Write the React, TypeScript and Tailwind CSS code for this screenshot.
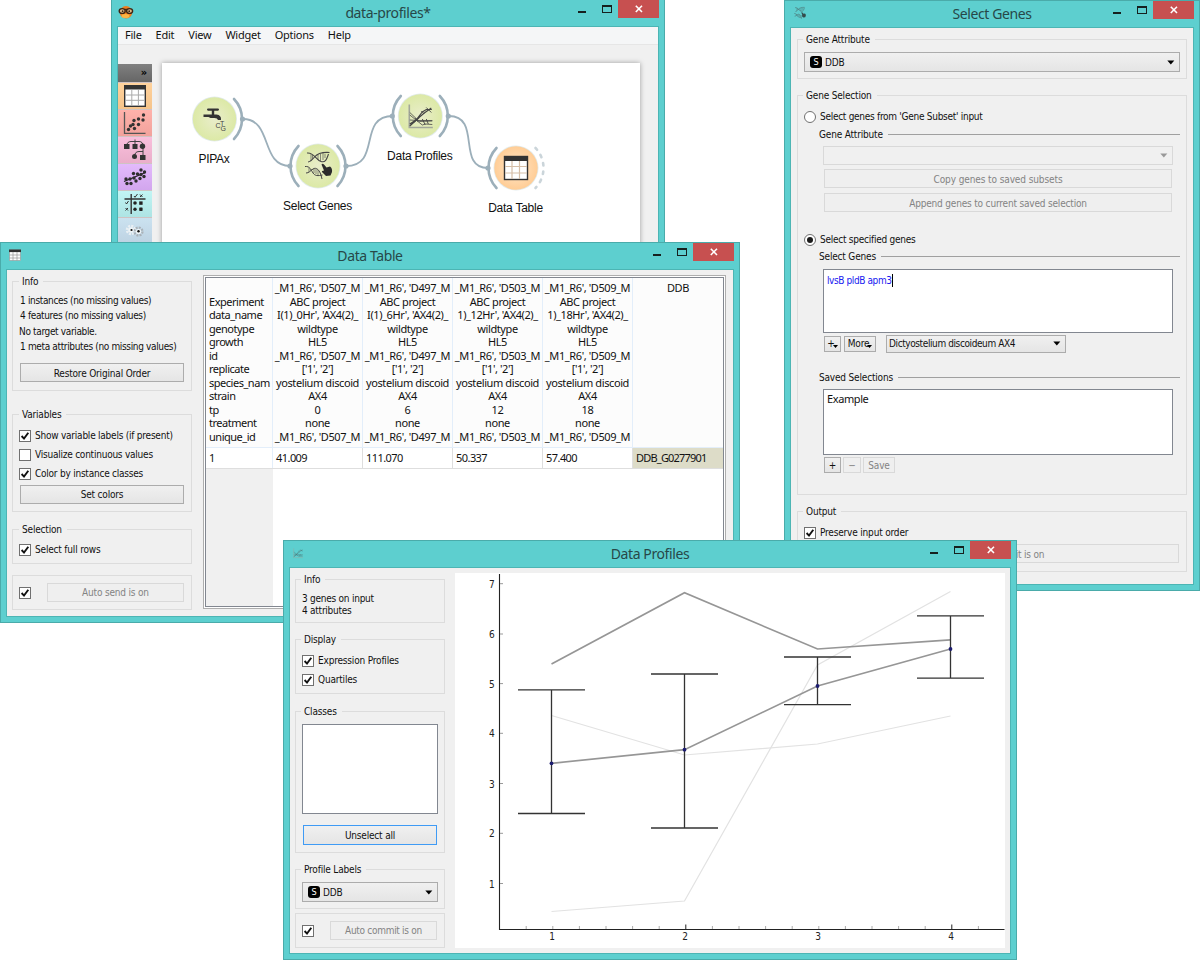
import React from "react";

type Kids = { children?: React.ReactNode; className?: string };

const UI = "font-['DejaVu_Sans_Condensed','DejaVu_Sans',sans-serif] text-[10px] tracking-[-0.18px]";
const SEGOE = "font-['Noto_Sans',sans-serif]";

function AppWindow({ title, icon, className, children }: Kids & { title: string; icon: React.ReactNode }) {
  return (
    <section className={`absolute flex flex-col border border-[#4aabaa] bg-[#5dcfcf] px-[5px] pb-[5px] ${className}`}>
      <header className="relative flex h-[26px] shrink-0 items-start">
        <div className="ml-[1px] mt-[4px] h-4 w-4">{icon}</div>
        <h1 className={`absolute inset-x-0 top-[3px] text-center text-[14px] leading-[20px] tracking-[-0.4px] text-[#274848] ${SEGOE}`}>{title}</h1>
        <div className="ml-auto flex items-start">
          <i className="mr-[16px] mt-[11px] h-[2px] w-[8px] bg-[#16211f]" />
          <i className="mr-[6px] mt-[5px] h-[8px] w-[10px] border border-t-2 border-[#16211f]" />
          <span className="flex h-[18px] w-[41px] items-center justify-center bg-[#c75050]">
            <svg width="8" height="8" viewBox="0 0 8 8"><path d="M0.8 0.8L7 7M7 0.8L0.8 7" stroke="#fff" strokeWidth="1.6" /></svg>
          </span>
        </div>
      </header>
      <div className={`flex min-h-0 flex-1 border border-[#4cb5b4] bg-[#f0f0f0] text-[#111] ${UI}`}>{children}</div>
    </section>
  );
}

function Group({ title, className = "", children }: Kids & { title: string }) {
  return (
    <fieldset className={`flex min-w-0 shrink-0 flex-col border border-[#dcdcdc] ${className}`}>
      <legend className="-ml-px h-[14px] whitespace-nowrap pl-[3px] pr-[5px] leading-[16px]">{title}</legend>
      {children}
    </fieldset>
  );
}

function Button({ children, className = "", disabled = false, focused = false }: Kids & { disabled?: boolean; focused?: boolean }) {
  const look = disabled
    ? "border-[#d9d9d9] bg-[#efefef] text-[#838383]"
    : focused
      ? "border-[#3f9bf5] bg-linear-to-b from-[#f0f0f0] to-[#e5e5e5] text-[#111]"
      : "border-[#acacac] bg-linear-to-b from-[#f0f0f0] to-[#e5e5e5] text-[#111]";
  return (
    <button className={`flex shrink-0 items-center justify-center whitespace-nowrap border ${look} ${className}`}>{children}</button>
  );
}

function Box({ checked = true }: { checked?: boolean }) {
  return (
    <span className="flex h-[12px] w-[12px] shrink-0 items-center justify-center border border-[#707070] bg-white">
      {checked && (
        <svg width="10" height="10" viewBox="0 0 10 10"><path d="M1.6 5L4 7.6L8.3 1.8" fill="none" stroke="#111" strokeWidth="1.9" /></svg>
      )}
    </span>
  );
}

function Check({ label, checked = true }: { label: string; checked?: boolean }) {
  return (
    <label className="flex h-[19px] shrink-0 items-center gap-[4px] whitespace-nowrap"><Box checked={checked} />{label}</label>
  );
}

function Radio({ label, on = false, className = "" }: { label: string; on?: boolean; className?: string }) {
  return (
    <label className={`flex h-[19px] shrink-0 items-center gap-[4px] whitespace-nowrap ${className}`}>
      <span className="flex h-[12px] w-[12px] items-center justify-center rounded-full border border-[#707070] bg-white">
        {on && <i className="h-[6px] w-[6px] rounded-full bg-[#1a1a1a]" />}
      </span>
      {label}
    </label>
  );
}

function Rule({ label, className = "" }: { label: string; className?: string }) {
  return (
    <div className={`flex h-[14px] shrink-0 items-center gap-[5px] pl-[15px] whitespace-nowrap ${className}`}>
      {label}<i className="h-px flex-1 bg-[#a0a0a0]" />
    </div>
  );
}

function Arrow({ color = "#000" }: { color?: string }) {
  return <svg width="8" height="5" viewBox="0 0 8 5"><path d="M0.3 0.5H7.3L3.8 4.5Z" fill={color} /></svg>;
}

function MenuTick() {
  return <svg className="-ml-[2px] mt-[6px]" width="5" height="3" viewBox="0 0 5 3"><path d="M0 0H5L2.500 3Z" /></svg>;
}

function DdbSelect() {
  return (
    <div className="flex h-[20px] shrink-0 items-center border border-[#acacac] bg-linear-to-b from-[#f0f0f0] to-[#e5e5e5] pl-[5px] pr-[4px]">
      <span className="mr-[3px] flex h-[12px] w-[12px] items-center justify-center rounded-[3px] bg-black text-[9px] leading-none tracking-normal text-white">S</span>
      DDB
      <span className="ml-auto"><Arrow /></span>
    </div>
  );
}

function TableGlyph() {
  return (
    <svg width="22" height="22" viewBox="0 0 22 22">
      <rect x="0.7" y="0.7" width="20.6" height="20.6" fill="#fff" stroke="#333" strokeWidth="1.4" />
      <rect x="0" y="0" width="22" height="4.5" fill="#333" />
      <path d="M7.8 5V21M14.4 5V21M1 10H21M1 15.3H21" stroke="#aaa" strokeWidth="1" />
    </svg>
  );
}

function ScatterGlyph() {
  const dots = [[5.5, 18.5], [10, 13.5], [7.5, 15], [11.5, 17.5], [11, 9.5], [15.500, 8], [15.5, 13.500], [20.5, 4], [20, 9]];
  return (
    <svg width="24" height="24" viewBox="0 0 24 24">
      <path d="M1.5 1V22.3H22.5" fill="none" stroke="#555" strokeWidth="1.3" />
      {dots.map(([x, y], i) => <circle key={i} cx={x} cy={y} r="1.7" fill="#333" />)}
    </svg>
  );
}

function TreeGlyph() {
  return (
    <svg width="24" height="24" viewBox="0 0 24 24">
      <path d="M3.5 8Q4 3.5 8 3.5H16Q20 3.5 20 8M12 1.500V8M20 9V17M11.5 19Q11.5 13.5 16 13.5H20" fill="none" stroke="#444" strokeWidth="1" />
      <g fill="#333"><rect x="1" y="6" width="5.5" height="5" /><rect x="9.5" y="6" width="5" height="5" /><circle cx="19.5" cy="8.3" r="2.7" /><circle cx="11.5" cy="18.500" r="2.5" /><rect x="17" y="17" width="5.5" height="5" /></g>
    </svg>
  );
}

function RegressionGlyph() {
  const dots = [[3, 14], [4, 18.500], [7, 14], [8, 18.500], [10.500, 8.500], [13, 16], [11, 13], [14.500, 9], [17, 13.500], [18, 5], [18, 9.500], [21.500, 7], [21, 11.500]];
  return (
    <svg width="24" height="24" viewBox="0 0 24 24">
      <path d="M1 16.5L22.5 7.5" stroke="#222" strokeWidth="1.2" />
      {dots.map(([x, y], i) => <circle key={i} cx={x} cy={y} r="1.7" fill="#2e2e2e" />)}
    </svg>
  );
}

function MatrixGlyph() {
  return (
    <svg width="24" height="24" viewBox="0 0 24 24" fill="none" stroke="#333">
      <path d="M1.5 7H22.5M8.2 2V22" strokeWidth="1.4" />
      <path d="M11 4L12 5.3L14.5 2M17 2.5L19.5 5M19.5 2.5L17 5M2.5 10.5L3.5 12L5.5 9M2.5 16L5 18.5M5 16L2.5 18.5" strokeWidth="1" />
      <g fill="#222" stroke="none"><circle cx="12" cy="11" r="1.800" /><rect x="16.200" y="9.400" width="3.400" height="3.400" /><circle cx="12" cy="17.2" r="1.7" /><rect x="16.200" y="15.500" width="3.400" height="3.400" rx="0.600" /></g>
    </svg>
  );
}

function BioGlyph() {
  return (
    <svg width="24" height="24" viewBox="0 0 24 24">
      <circle cx="8" cy="11" r="4" fill="none" stroke="#e9eff3" strokeWidth="2.500" strokeDasharray="2 1.1" />
      <circle cx="15.5" cy="12.500" r="4" fill="none" stroke="#aab2b8" strokeWidth="2.200" strokeDasharray="2 1.1" />
      <g fill="#edf3f6"><circle cx="8" cy="11" r="2.800" /><circle cx="15.5" cy="12.5" r="2.6" /></g>
      <circle cx="8.5" cy="11" r="1.1" fill="#111" /><circle cx="15.5" cy="12.2" r="1.2" fill="#111" />
    </svg>
  );
}

function OrangeLogo() {
  return (
    <svg width="16" height="16" viewBox="0 0 16 16">
      <circle cx="8" cy="8.300" r="6.200" fill="#ef7d1c" />
      <ellipse cx="7.500" cy="12" rx="4" ry="2" fill="#f9b545" />
      <path d="M5.500 6.500Q8 4.500 10.500 6.500" stroke="#3b2414" strokeWidth="1.4" fill="none" />
      <ellipse cx="4.2" cy="7" rx="3" ry="2.400" fill="#e6bd84" stroke="#3b2414" strokeWidth="1.4" />
      <ellipse cx="11.6" cy="7" rx="3" ry="2.400" fill="#e6bd84" stroke="#3b2414" strokeWidth="1.4" />
      <circle cx="4.600" cy="7.2" r="0.900" fill="#3b2414" /><circle cx="11.200" cy="7.2" r="0.900" fill="#3b2414" />
    </svg>
  );
}

function SmallTable() {
  return (
    <svg width="16" height="16" viewBox="0 0 16 16">
      <rect x="2.5" y="3" width="11" height="10.5" fill="#fff" stroke="#9aa" strokeWidth="0.8" />
      <rect x="2" y="2.5" width="12" height="2.6" fill="#333" />
      <path d="M6 5V13.5M10 5V13.5M2.5 8H13.5M2.5 11H13.5" stroke="#9a9a9a" strokeWidth="0.7" />
    </svg>
  );
}

function Helix() {
  return (
    <g fill="none" stroke="#454545">
      <path d="M-11 -13C-4 -14 -2 -6 3 -4.500S9 -8 10.500 -12M-10 -4C-8 -4 -6 -6 -3.500 -9S4 -14 11.500 -13.500" strokeWidth="1.1" />
      <path d="M-7 -12V-5M-5.500 -11V-7M0 -11V-6M2.500 -12V-5M5 -13V-6M7 -12V-8" strokeWidth="0.6" />
      <path d="M-13 0.500C-8 0 -7 4 -5 7S0 10 4.500 9M-12 7C-9 7 -8 5 -5 3S2 3 4 13" strokeWidth="1" />
      <path d="M-9 2V6M-7 3V5M-4 3V7M-2 3V8M0 4V9" strokeWidth="0.6" />
      <path d="M3.500 -1.500Q4.500 -3 6 -1.500L8.500 1.500L12 0.500Q14.500 2 14 6L12.500 9.500L8 10L4 6Q3.500 4.500 6 4.500Z" fill="#2b2b2b" stroke="none" />
    </g>
  );
}

function ProfileGlyph() {
  return (
    <g fill="none" stroke="#444">
      <path d="M-11 -11.500V11.500H12.500" stroke="#a2a79a" strokeWidth="1.6" />
      <path d="M-10.500 -3.500L-1 5.500L12 5M-10.500 -1L-3 5L2 9L5 8L12 8.500M-10.500 4L-2 4.500L12 4.500" strokeWidth="0.8" />
      <path d="M-10.500 10L-5 5L2 -4L6 -6.500H11.500M-10.500 8L-3 3L4 -3L11 -8" strokeWidth="1.1" />
      <path d="M6 -8.500L11 -3.500M1 -5L4 -2M-5 2L-2 6M-6 6L-1 2M2 3L5 9M6 3L8 8" strokeWidth="0.9" />
    </g>
  );
}

type NodeProps = { x: number; y: number; label: string; fill: string; left?: boolean; dashed?: boolean; children?: React.ReactNode };
function Node({ x, y, label, fill, left = true, dashed = false, children }: NodeProps) {
  return (
    <g transform={`translate(${x} ${y})`}>
      <circle r="22.500" fill="#cfdde0" opacity="0.6" />
      <circle r="21.700" fill={fill} />
      {left && <><path d="M-19.500 -20A29 29 0 0 0 -19.500 20" fill="none" stroke="#9cafba" strokeWidth="2.600" strokeLinecap="round" /><circle cx="-28" r="2.600" fill="#9cafba" /></>}
      <path d="M19.500 -20A29 29 0 0 1 19.500 20" fill="none" stroke={dashed ? "#cbd5da" : "#9cafba"} strokeWidth="2.600" strokeLinecap="round" strokeDasharray={dashed ? "2.5 6" : undefined} />
      {!dashed && <circle cx="28" r="2.600" fill="#9cafba" />}
      {children}
      <text x="-0.500" y={44} textAnchor="middle" fontSize="12" fontFamily="Liberation Sans, sans-serif" fill="#111" letterSpacing="-0.25">{label}</text>
    </g>
  );
}

function Workflow() {
  return (
    <svg className="block" width="478" height="180" viewBox="162 63 478 180">
      <defs>
        <radialGradient id="green"><stop offset="0" stopColor="#e9edcb" /><stop offset="1" stopColor="#dce9a6" /></radialGradient>
        <radialGradient id="orange"><stop offset="0" stopColor="#ffe6c8" /><stop offset="1" stopColor="#ffcd96" /></radialGradient>
      </defs>
      <g fill="none" stroke="#9cafba" strokeWidth="1.800">
        <path d="M243 119C273 119 260 166 290 166" />
        <path d="M346 166C382 166 357 116 393 116" />
        <path d="M449 116C482 116 456 168 488 168" />
      </g>
      <Node x={214.5} y={119} label="PIPAx" fill="url(#green)" left={false}>
        <g fill="#333"><rect x="-7.500" y="-10.500" width="12" height="2.200" rx="1.100" /><rect x="-2.700" y="-10" width="2.400" height="6" /><path d="M-11 -4.500H2Q7 -4 6.500 1H3.500Q3 -1 0 -1H-4L-6 -2H-11Z" /></g>
        <g fontSize="7" fontFamily="Liberation Sans, sans-serif" fill="#444"><text x="1" y="8.500">C</text><text x="5.500" y="6.500">T</text><text x="6" y="12">G</text></g>
      </Node>
      <Node x={318} y={166} label="Select Genes" fill="url(#green)"><Helix /></Node>
      <Node x={420.3} y={116} label="Data Profiles" fill="url(#green)"><ProfileGlyph /></Node>
      <Node x={516} y={168} label="Data Table" fill="url(#orange)" dashed>
        <rect x="-11.500" y="-11.500" width="23" height="23" fill="#fff" stroke="#333" strokeWidth="1.400" />
        <rect x="-12" y="-12" width="24" height="5" fill="#333" />
        <path d="M-4 -7V11M3.500 -7V11M-11 -1.500H11M-11 5H11" stroke="#d6bfa8" strokeWidth="1.200" />
      </Node>
    </svg>
  );
}

function ProfileChart() {
  const xs = [551.5, 684.5, 817.5, 950.5];
  const line = (ys: number[]) => ys.map((y, i) => `${xs[i]},${y}`).join(" ");
  const bars = [[689.8, 813.5], [674, 828], [657, 704.7], [615.8, 678.2]];
  const means = [763.3, 749.7, 686, 649];
  const yt = [883.5, 833.3, 783.5, 733.3, 683.6, 634, 583.7];
  return (
    <svg className="block" width="550" height="375" viewBox="455 573 550 375">
      <g fill="none" stroke="#e2e2e2" strokeWidth="1.200">
        <polyline points={line([715.5, 755, 744, 716])} />
        <polyline points={line([911.5, 901, 665, 591.5])} />
      </g>
      <g fill="none" stroke="#969696" strokeWidth="1.700">
        <polyline points={line([664, 592.8, 649, 639.8])} />
        <polyline points={line(means)} />
      </g>
      <g stroke="#333" strokeWidth="1.300">
        {bars.map(([a, b], i) => <path key={i} d={`M${xs[i]} ${a}V${b}M${xs[i] - 33.5} ${a}H${xs[i] + 33.5}M${xs[i] - 33.5} ${b}H${xs[i] + 33.5}`} />)}
      </g>
      {means.map((y, i) => <circle key={i} cx={xs[i]} cy={y} r="1.900" fill="#1c1c70" />)}
      <path d="M499.500 574V929.500H1004.500" fill="none" stroke="#222" strokeWidth="1.100" />
      {Array.from({ length: 18 }, (_, i) => <path key={i} d={`M${526.2 + i * 26.6} ${i === 6 || i === 16 ? 924.5 : 926}V929`} stroke={i === 6 || i === 16 ? "#222" : "#aaa"} />)}
      <g fontFamily="DejaVu Sans Condensed, DejaVu Sans, sans-serif" fontSize="10" fill="#222">
        {yt.map((y, i) => <g key={i}><path d={`M500 ${y}H503`} stroke="#999" /><text x="494.500" y={y + 4} textAnchor="end">{i + 1}</text></g>)}
        {xs.map((x, i) => <text key={i} x={x + 0.5} y="940" textAnchor="middle">{i + 1}</text>)}
      </g>
    </svg>
  );
}

const ATTRS = ["Experiment", "data_name", "genotype", "growth", "id", "replicate", "species_nam", "strain", "tp", "treatment", "unique_id"];
const COLS = [
  { d: "D507", hr: "I(1)_0Hr', 'AX4(2)_", tp: "0", v: "41.009" },
  { d: "D497", hr: "I(1)_6Hr', 'AX4(2)_", tp: "6", v: "111.070" },
  { d: "D503", hr: "1)_12Hr', 'AX4(2)_", tp: "12", v: "50.337" },
  { d: "D509", hr: "1)_18Hr', 'AX4(2)_", tp: "18", v: "57.400" },
];

function DataGrid() {
  const cell = "shrink-0 border-r";
  return (
    <div className={`flex h-full flex-col bg-white text-[11px] tracking-[-0.4px] ${SEGOE}`}>
      <div className="flex h-[170px] shrink-0 border-b border-[#e3eefa] bg-[#fcfcfc] leading-[13.55px]">
        <div className={`${cell} w-[67px] border-[#e3eefa] pl-[3px] pt-[16.500px] tracking-[-0.48px] whitespace-nowrap`}>
          {ATTRS.map((a) => <div key={a}>{a}</div>)}
        </div>
        {COLS.map((c) => {
          const ids = `_M1_R6', '${c.d}_M`;
          const rows = [ids, "ABC project", c.hr, "wildtype", "HL5", ids, "['1', '2']", "yostelium discoid", "AX4", c.tp, "none", ids];
          return (
            <div key={c.d} className={`${cell} w-[90px] border-[#e3eefa] px-[2px] pt-[3px]`}>
              {rows.map((r, i) => <div key={i} className="flex justify-center whitespace-nowrap">{r}</div>)}
            </div>
          );
        })}
        <div className="flex-1 pt-[3px] text-center">DDB</div>
      </div>
      <div className="flex h-[21px] shrink-0 border-b border-[#dedede] leading-[20px] tracking-[-0.55px]">
        <div className={`${cell} w-[67px] border-[#e3eefa] pl-[3px]`}>1</div>
        {COLS.map((c) => <div key={c.d} className={`${cell} w-[90px] border-[#dedede] pl-[3px]`}>{c.v}</div>)}
        <div className="flex-1 bg-[#dddcc8] pl-[3px] tracking-[-0.8px]">DDB_G0277901</div>
      </div>
      <div className="w-[67px] flex-1 bg-[#f0f0f0]" />
    </div>
  );
}

const DOCK = [
  { bg: "bg-linear-to-b from-[#ffd29c] to-[#f5c48b]", icon: <TableGlyph /> },
  { bg: "bg-linear-to-b from-[#ffb2ab] to-[#f2a29c]", icon: <ScatterGlyph /> },
  { bg: "bg-linear-to-b from-[#f9bfdc] to-[#eaaeca]", icon: <TreeGlyph /> },
  { bg: "bg-linear-to-b from-[#e3bafc] to-[#d2a6ee]", icon: <RegressionGlyph /> },
  { bg: "bg-linear-to-b from-[#c1f5f4] to-[#aee4e4]", icon: <MatrixGlyph /> },
  { bg: "bg-linear-to-b from-[#cbe2f0] to-[#bdd2e2]", icon: <BioGlyph /> },
];

export default function App() {
  return (
    <main className="relative h-[960px] w-[1200px] overflow-hidden bg-white">
      <AppWindow title="data-profiles*" icon={<OrangeLogo />} className="left-[111px] top-[-1px] h-[260px] w-[554px]">
        <div className="flex flex-1 flex-col">
          <nav className={`flex h-[18px] shrink-0 items-center gap-[14px] border-b border-[#e6e6e6] bg-[#f5f6f7] pl-[7px] text-[11px] tracking-[-0.25px] ${SEGOE}`}>
            {["File", "Edit", "View", "Widget", "Options", "Help"].map((m) => <span key={m}>{m}</span>)}
          </nav>
          <div className="flex min-h-0 flex-1 overflow-hidden pt-[18px]">
            <aside className="mt-px w-[34px] shrink-0">
              <div className="flex h-[18px] items-center justify-end bg-linear-to-b from-[#808080] to-[#666] pr-[5px] text-[11px] font-bold text-black">»</div>
              {DOCK.map((d, i) => <div key={i} className={`flex h-[27px] items-center justify-center border-t border-[#cfc3c3] ${d.bg}`}>{d.icon}</div>)}
            </aside>
            <div className="ml-[10px] h-[200px] w-[478px] bg-white shadow-[0_0_5px_rgba(0,0,0,0.35)]"><Workflow /></div>
          </div>
        </div>
      </AppWindow>

      <AppWindow
        title="Select Genes"
        className="left-[784px] top-0 h-[591px] w-[416px]"
        icon={<svg className="ml-px opacity-80" width="16" height="16" viewBox="-18 -19 37 37"><Helix /></svg>}
      >
        <div className="flex w-[402px] flex-col px-[6px] pt-[4px]">
          <Group title="Gene Attribute" className="h-[47px] px-[6px]">
            <div className="pt-[6px]"><DdbSelect /></div>
          </Group>
          <Group title="Gene Selection" className="mt-[9px] h-[407px] px-[6px] pt-[5px]">
            <Radio label="Select genes from 'Gene Subset' input" className="tracking-[-0.28px]" />
            <Rule label="Gene Attribute" className="mt-px" />
            <div className="ml-[19px] mr-[7px] mt-[5px] flex h-[19px] shrink-0 items-center justify-end border border-[#d9d9d9] pr-[4px]"><Arrow color="#999" /></div>
            <Button disabled className="ml-[20px] mr-[8px] mt-[4px] h-[19px] pt-[2px] tracking-[-0.1px]">Copy genes to saved subsets</Button>
            <Button disabled className="ml-[20px] mr-[8px] mt-[5px] h-[19px] pt-[2px]">Append genes to current saved selection</Button>
            <Radio label="Select specified genes" on className="mt-[18px] tracking-[-0.25px]" />
            <Rule label="Select Genes" />
            <div className="ml-[19px] mr-[7px] mt-[6px] flex h-[64px] shrink-0 items-start border border-[#828790] bg-white pl-[3px] pt-[4px] leading-[13px] tracking-[-0.4px] text-[#2020f0]">
              lvsB pldB apm3<i className="h-[13px] w-px bg-black" />
            </div>
            <div className="ml-[20px] mt-px flex h-[19px] shrink-0 items-center">
              <Button className="h-[16px] w-[17px]">+<MenuTick /></Button>
              <Button className="ml-[3px] h-[16px] w-[32px]">More<MenuTick /></Button>
              <div className="ml-[10px] flex h-[18px] w-[180px] items-center justify-between border border-[#acacac] bg-linear-to-b from-[#f0f0f0] to-[#e5e5e5] pl-[2px] pr-[4px] tracking-[-0.4px]">Dictyostelium discoideum AX4<Arrow /></div>
            </div>
            <Rule label="Saved Selections" className="mt-[17px]" />
            <div className={`ml-[19px] mr-[7px] mt-[5px] h-[66px] shrink-0 border border-[#828790] bg-white pl-[3px] pt-[1px] text-[11px] tracking-[-0.4px] leading-[15px] ${SEGOE}`}>Example</div>
            <div className="ml-[20px] mt-[2px] flex h-[16px] shrink-0 gap-[2px]">
              <Button className="w-[17px]">+</Button><Button disabled className="w-[18px]">−</Button><Button disabled className="w-[32px]">Save</Button>
            </div>
          </Group>
          <Group title="Output" className="mt-[9px] h-[68px] px-[6px] pt-[5px]">
            <Check label="Preserve input order" />
            <div className="mt-[2px] flex h-[19px] items-center gap-[15px] pr-px"><Box /><Button disabled className="h-[19px] flex-1 pt-px">Auto commit is on</Button></div>
          </Group>
        </div>
      </AppWindow>

      <AppWindow title="Data Table" icon={<SmallTable />} className="left-0 top-[242px] h-[381px] w-[740px]">
        <div className="ml-[5px] flex w-[180px] shrink-0 flex-col pt-[4px]">
          <Group title="Info" className="h-[117px] px-[7px]">
            <div className="whitespace-nowrap pt-[5px] leading-[15.300px] tracking-[-0.35px]">
              <p>1 instances (no missing values)</p><p>4 features (no missing values)</p><p className="-ml-px">No target variable.</p><p>1 meta attributes (no missing values)</p>
            </div>
            <Button className="mt-[9px] h-[19px] pt-[2px]">Restore Original Order</Button>
          </Group>
          <Group title="Variables" className="mt-[16px] h-[105px] px-[7px] pt-[5px]">
            <div className="-ml-px tracking-[-0.23px]">
              <Check label="Show variable labels (if present)" />
              <Check label="Visualize continuous values" checked={false} />
              <Check label="Color by instance classes" />
            </div>
            <Button className="mt-[2px] h-[19px]">Set colors</Button>
          </Group>
          <Group title="Selection" className="mt-[10px] h-[42px] px-[7px] pt-[4px]"><div className="-ml-px"><Check label="Select full rows" /></div></Group>
          <div className="mt-[11px] flex h-[35px] items-center gap-[16px] border border-[#dcdcdc] pl-[6px] pr-[7px]"><Box /><Button disabled className="h-[19px] flex-1">Auto send is on</Button></div>
        </div>
        <div className="ml-[11px] mt-[5px] h-[334px] w-[523px] border border-[#aeaeae] bg-white p-px">
          <div className="h-full overflow-hidden border border-[#828790]"><DataGrid /></div>
        </div>
      </AppWindow>

      <AppWindow
        title="Data Profiles"
        className="left-[283px] top-[540px] h-[420px] w-[734px]"
        icon={<svg className="opacity-60" width="16" height="16" viewBox="-20 -20 40 40"><ProfileGlyph /></svg>}
      >
        <div className="ml-[5px] flex w-[150px] shrink-0 flex-col pt-[4px]">
          <Group title="Info" className="h-[51px] px-[6px]">
            <div className="pt-[7px] leading-[11.500px] tracking-[-0.25px]"><p>3 genes on input</p><p>4 attributes</p></div>
          </Group>
          <Group title="Display" className="mt-[9px] h-[62px] px-[6px] pt-[5px]"><Check label="Expression Profiles" /><Check label="Quartiles" /></Group>
          <Group title="Classes" className="mt-[10px] h-[149px] px-[6px] pt-[6px]">
            <div className="h-[90px] shrink-0 border border-[#828790] bg-white" />
            <Button focused className="mx-px mt-[11px] h-[20px]">Unselect all</Button>
          </Group>
          <Group title="Profile Labels" className="mt-[9px] h-[47px] px-[6px] pt-[6px]"><DdbSelect /></Group>
          <div className="mt-[4px] flex h-[35px] items-center gap-[16px] border border-[#dcdcdc] pl-[6px] pr-[7px]"><Box /><Button disabled className="h-[19px] flex-1 tracking-[-0.3px]">Auto commit is on</Button></div>
        </div>
        <div className="ml-[10px] mt-[5px] h-[375px] w-[550px] bg-white"><ProfileChart /></div>
      </AppWindow>
    </main>
  );
}
